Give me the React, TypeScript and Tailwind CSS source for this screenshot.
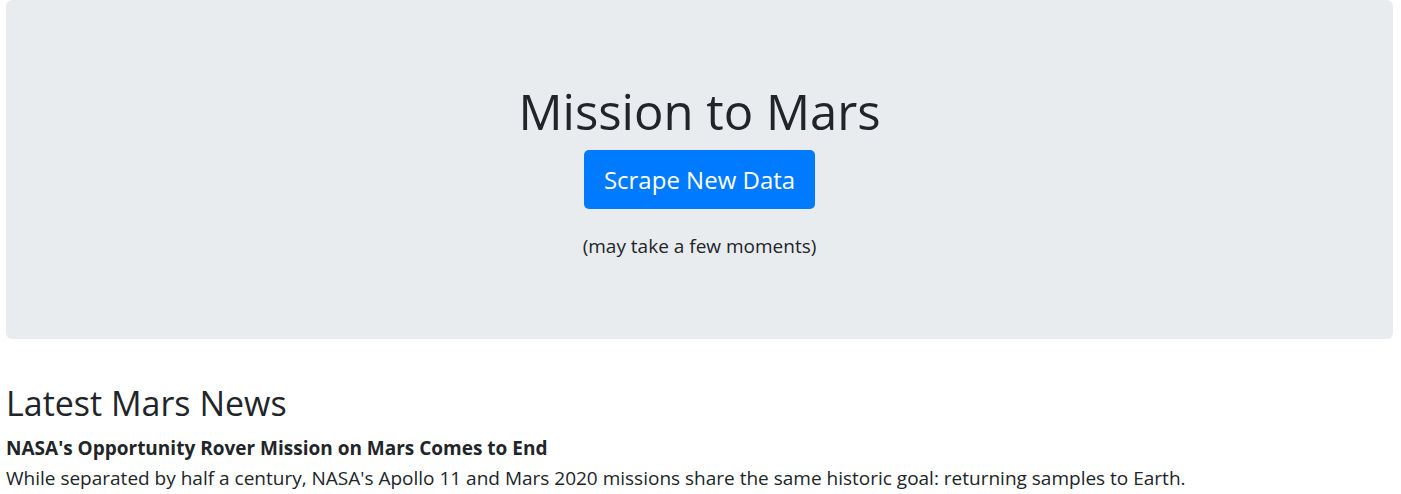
export default function App() {
  return (
    <div className="min-h-screen bg-white text-[#212529] font-['Open_Sans',sans-serif]">
      <div className="ml-[6px] mr-[8px]">
        {/* Jumbotron */}
        <div className="flex h-[339px] flex-col items-center rounded-[6px] bg-[#e9ecef] pt-[78px]">
          <h1 className="text-[49px] leading-[67px] font-normal">Mission to Mars</h1>
          <button className="mt-[5px] h-[59px] w-[231px] rounded-[5px] bg-[#007bff] text-[24px] text-white">
            Scrape New Data
          </button>
          <p className="mt-[24px] text-[19px] leading-[27px]">(may take a few moments)</p>
        </div>

        {/* News */}
        <div className="pt-[42px]">
          <h2 className="text-[34px] leading-[44px] font-normal">Latest Mars News</h2>
          <h5 className="mt-[8px] text-[19px] leading-[30px] font-bold">
            NASA's Opportunity Rover Mission on Mars Comes to End
          </h5>
          <p className="text-[19px] leading-[30px]">
            While separated by half a century, NASA's Apollo 11 and Mars 2020 missions share the same historic goal: returning samples to Earth.
          </p>
        </div>
      </div>
    </div>
  )
}
